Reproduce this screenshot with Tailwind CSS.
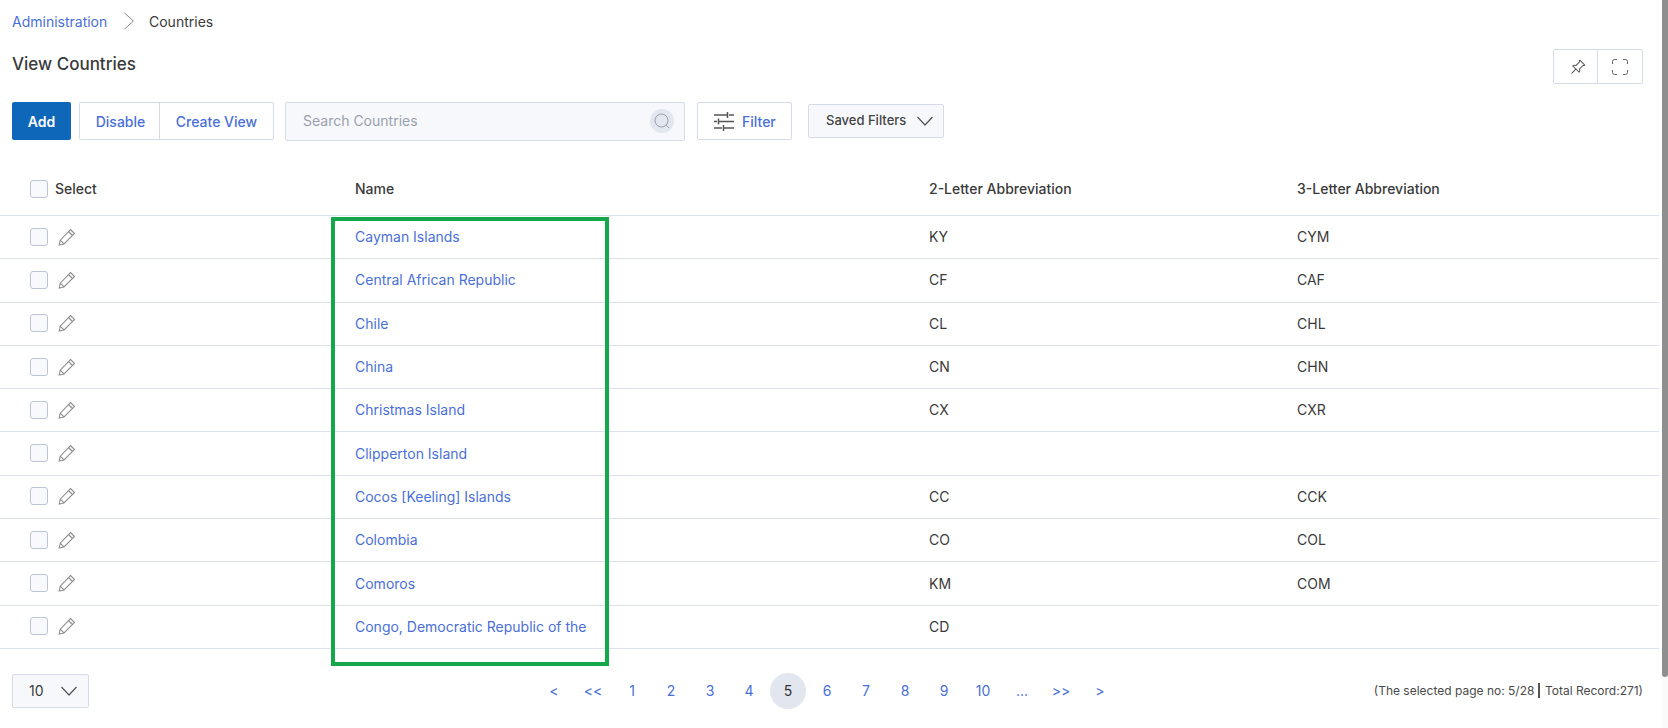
<!doctype html>
<html>
<head>
<meta charset="utf-8">
<script src="https://cdn.jsdelivr.net/npm/@tailwindcss/browser@4"></script>
</head>
<body class="overflow-hidden bg-white">
<div class="flex h-[728px] w-[1668px] font-['Inter',sans-serif] text-[14px] text-[#3a3a3a]">
  <main class="relative w-[1662px] shrink-0 pr-[3px]">
    <!-- breadcrumb -->
    <nav class="flex h-[42px] items-center pl-[12px]">
      <a class="w-[111px] text-[#4a6fd8]">Administration</a>
      <svg class="h-[18px] w-[12px] text-[#8a8a8a]" viewBox="0 0 12 18" fill="none" stroke="currentColor" stroke-width="1"><path d="M1.500 1l9 8-9 8"/></svg>
      <span class="ml-[14px]">Countries</span>
    </nav>
    <!-- title -->
    <div class="flex h-[60px] items-start justify-between pl-[12px] pr-[16px]">
      <h1 class="mt-[10px] text-[17px] leading-[25px] font-medium">View Countries</h1>
      <div class="mt-[7px] flex h-[35px] w-[90px] rounded-[2px] border border-[#d5dbe8]">
        <div class="flex w-[44px] items-center justify-center border-r border-[#d5dbe8] pl-[4px]">
          <svg class="h-[16px] w-[16px] text-[#555]" viewBox="0 0 16 16" fill="currentColor"><path d="M9.828.722a.5.5 0 0 1 .354.146l4.95 4.95a.5.5 0 0 1 0 .707c-.48.48-1.072.588-1.503.588-.177 0-.335-.018-.46-.039l-3.134 3.134a5.927 5.927 0 0 1 .16 1.013c.046.702-.032 1.687-.72 2.375a.5.5 0 0 1-.707 0l-2.829-2.828-3.182 3.182c-.195.195-1.219.902-1.414.707-.195-.195.512-1.22.707-1.414l3.182-3.182-2.828-2.829a.5.5 0 0 1 0-.707c.688-.688 1.673-.767 2.375-.72a5.922 5.922 0 0 1 1.013.16l3.134-3.133a2.772 2.772 0 0 1-.04-.461c0-.43.108-1.022.589-1.503a.5.5 0 0 1 .353-.146zm.122 2.112v-.002.002zm0-.002v.002a.5.5 0 0 1-.122.51L6.293 6.878a.5.5 0 0 1-.511.12H5.78l-.014-.004a4.507 4.507 0 0 0-.288-.076 4.922 4.922 0 0 0-.765-.116c-.422-.028-.836.008-1.175.15l5.51 5.509c.141-.34.177-.753.149-1.175a4.924 4.924 0 0 0-.192-1.054l-.004-.013v-.001a.5.5 0 0 1 .12-.512l3.536-3.535a.5.5 0 0 1 .532-.115l.096.022c.087.017.208.034.344.034.114 0 .23-.011.343-.04L9.927 2.028c-.029.113-.04.23-.04.343a1.779 1.779 0 0 0 .062.46z"/></svg>
        </div>
        <div class="flex flex-1 items-center justify-center">
          <svg class="h-[16px] w-[16px] text-[#666]" viewBox="0 0 16 16" fill="none" stroke="currentColor" stroke-width="1"><path d="M.5 5V2.500a2 2 0 0 1 2-2H5M11 .5h2.500a2 2 0 0 1 2 2V5M15.500 11v2.500a2 2 0 0 1-2 2H11M5 15.500H2.500a2 2 0 0 1-2-2V11"/></svg>
        </div>
      </div>
    </div>
    <!-- toolbar -->
    <div class="flex h-[38px] items-center pl-[12px]">
      <button class="h-[38px] w-[59px] rounded-[2px] bg-[#0f67b9] font-semibold text-white">Add</button>
      <div class="ml-[8px] flex h-[38px] w-[195px] rounded-[2px] border border-[#d5dbe8] font-medium text-[#4a6fd8]">
        <span class="flex w-[80px] items-center justify-center border-r border-[#d5dbe8] pl-[2px]">Disable</span>
        <span class="flex flex-1 items-center justify-center">Create View</span>
      </div>
      <div class="ml-[11px] flex h-[39px] w-[400px] items-center justify-between rounded-[2px] border border-[#d5dbe8] bg-[#f6f8fb] pb-[1px] pl-[17px] pr-[10px] text-[#9aa1ad]">
        <span>Search Countries</span>
        <span class="flex h-[24px] w-[24px] items-center justify-center rounded-full bg-[#e1e6ef]">
          <svg class="h-[18px] w-[18px] text-[#98a0ad]" viewBox="0 0 18 18" fill="none" stroke="currentColor" stroke-width="1"><circle cx="8.500" cy="8.500" r="6.500"/><path d="M13.200 13.200L16 16"/></svg>
        </span>
      </div>
      <div class="ml-[12px] flex h-[38px] w-[95px] items-center rounded-[2px] border border-[#d5dbe8] pl-[16px] font-medium text-[#4a6fd8]">
        <svg class="h-[19px] w-[20px] text-[#555]" viewBox="0 0 20 19" fill="none" stroke="currentColor" stroke-width="1.500"><path d="M0 3h13M15 3h5M13.500 0v6M0 9.500h3M5 9.500h15M4.500 6.500v6M0 16h8M10 16h10M9.500 13v6"/></svg>
        <span class="ml-[8px]">Filter</span>
      </div>
      <div class="ml-[16px] flex h-[34px] w-[136px] items-center rounded-[2px] border border-[#d5dbe8] bg-[#f6f8fb] pl-[17px]">
        <span class="text-[13px] font-medium text-[#444]">Saved Filters</span>
        <svg class="ml-[11px] h-[10px] w-[16px] text-[#555]" viewBox="0 0 16 10" fill="none" stroke="currentColor" stroke-width="1.200"><path d="M.5 1l7.500 8 7.500-8"/></svg>
      </div>
    </div>
    <!-- table -->
    <div class="mt-[31px] text-[14px]">
      <div class="grid h-[45px] grid-cols-[355px_574px_368px_1fr] items-center border-b border-[#dde2ea] pb-[9px] font-medium">
        <div class="flex items-center pl-[30px]"><span class="h-[18px] w-[18px] rounded-[3px] border border-[#bcc5d6] bg-[#f7f9fc]"></span><span class="ml-[7px]">Select</span></div>
        <div>Name</div><div>2-Letter Abbreviation</div><div>3-Letter Abbreviation</div>
      </div>
      <div class="grid h-[43.300px] grid-cols-[355px_574px_368px_1fr] items-center border-b border-[#dde2ea] pb-[1px]"><div class="flex items-center gap-[10px] pl-[30px]"><span class="h-[18px] w-[18px] rounded-[3px] border border-[#bcc5d6] bg-[#f7f9fc]"></span><svg class="h-[18px] w-[18px] text-[#8f8f8f]" viewBox="0 0 18 18" fill="none" stroke="currentColor" stroke-width="1.100"><path d="M12.500 1.500l4 4L6 16l-4.800 1 1-4.800zM10.500 3.500l4 4M2.400 12.300l3.400 3.400"/></svg></div><a class="text-[#4a6fd8]">Cayman Islands</a><div>KY</div><div>CYM</div></div>
      <div class="grid h-[43.300px] grid-cols-[355px_574px_368px_1fr] items-center border-b border-[#dde2ea] pb-[1px]"><div class="flex items-center gap-[10px] pl-[30px]"><span class="h-[18px] w-[18px] rounded-[3px] border border-[#bcc5d6] bg-[#f7f9fc]"></span><svg class="h-[18px] w-[18px] text-[#8f8f8f]" viewBox="0 0 18 18" fill="none" stroke="currentColor" stroke-width="1.100"><path d="M12.500 1.500l4 4L6 16l-4.800 1 1-4.800zM10.500 3.500l4 4M2.400 12.300l3.400 3.400"/></svg></div><a class="text-[#4a6fd8]">Central African Republic</a><div>CF</div><div>CAF</div></div>
      <div class="grid h-[43.300px] grid-cols-[355px_574px_368px_1fr] items-center border-b border-[#dde2ea] pb-[1px]"><div class="flex items-center gap-[10px] pl-[30px]"><span class="h-[18px] w-[18px] rounded-[3px] border border-[#bcc5d6] bg-[#f7f9fc]"></span><svg class="h-[18px] w-[18px] text-[#8f8f8f]" viewBox="0 0 18 18" fill="none" stroke="currentColor" stroke-width="1.100"><path d="M12.500 1.500l4 4L6 16l-4.800 1 1-4.800zM10.500 3.500l4 4M2.400 12.300l3.400 3.400"/></svg></div><a class="text-[#4a6fd8]">Chile</a><div>CL</div><div>CHL</div></div>
      <div class="grid h-[43.300px] grid-cols-[355px_574px_368px_1fr] items-center border-b border-[#dde2ea] pb-[1px]"><div class="flex items-center gap-[10px] pl-[30px]"><span class="h-[18px] w-[18px] rounded-[3px] border border-[#bcc5d6] bg-[#f7f9fc]"></span><svg class="h-[18px] w-[18px] text-[#8f8f8f]" viewBox="0 0 18 18" fill="none" stroke="currentColor" stroke-width="1.100"><path d="M12.500 1.500l4 4L6 16l-4.800 1 1-4.800zM10.500 3.500l4 4M2.400 12.300l3.400 3.400"/></svg></div><a class="text-[#4a6fd8]">China</a><div>CN</div><div>CHN</div></div>
      <div class="grid h-[43.300px] grid-cols-[355px_574px_368px_1fr] items-center border-b border-[#dde2ea] pb-[1px]"><div class="flex items-center gap-[10px] pl-[30px]"><span class="h-[18px] w-[18px] rounded-[3px] border border-[#bcc5d6] bg-[#f7f9fc]"></span><svg class="h-[18px] w-[18px] text-[#8f8f8f]" viewBox="0 0 18 18" fill="none" stroke="currentColor" stroke-width="1.100"><path d="M12.500 1.500l4 4L6 16l-4.800 1 1-4.800zM10.500 3.500l4 4M2.400 12.300l3.400 3.400"/></svg></div><a class="text-[#4a6fd8]">Christmas Island</a><div>CX</div><div>CXR</div></div>
      <div class="grid h-[43.300px] grid-cols-[355px_574px_368px_1fr] items-center border-b border-[#dde2ea] pb-[1px]"><div class="flex items-center gap-[10px] pl-[30px]"><span class="h-[18px] w-[18px] rounded-[3px] border border-[#bcc5d6] bg-[#f7f9fc]"></span><svg class="h-[18px] w-[18px] text-[#8f8f8f]" viewBox="0 0 18 18" fill="none" stroke="currentColor" stroke-width="1.100"><path d="M12.500 1.500l4 4L6 16l-4.800 1 1-4.800zM10.500 3.500l4 4M2.400 12.300l3.400 3.400"/></svg></div><a class="text-[#4a6fd8]">Clipperton Island</a><div></div><div></div></div>
      <div class="grid h-[43.300px] grid-cols-[355px_574px_368px_1fr] items-center border-b border-[#dde2ea] pb-[1px]"><div class="flex items-center gap-[10px] pl-[30px]"><span class="h-[18px] w-[18px] rounded-[3px] border border-[#bcc5d6] bg-[#f7f9fc]"></span><svg class="h-[18px] w-[18px] text-[#8f8f8f]" viewBox="0 0 18 18" fill="none" stroke="currentColor" stroke-width="1.100"><path d="M12.500 1.500l4 4L6 16l-4.800 1 1-4.800zM10.500 3.500l4 4M2.400 12.300l3.400 3.400"/></svg></div><a class="text-[#4a6fd8]">Cocos [Keeling] Islands</a><div>CC</div><div>CCK</div></div>
      <div class="grid h-[43.300px] grid-cols-[355px_574px_368px_1fr] items-center border-b border-[#dde2ea] pb-[1px]"><div class="flex items-center gap-[10px] pl-[30px]"><span class="h-[18px] w-[18px] rounded-[3px] border border-[#bcc5d6] bg-[#f7f9fc]"></span><svg class="h-[18px] w-[18px] text-[#8f8f8f]" viewBox="0 0 18 18" fill="none" stroke="currentColor" stroke-width="1.100"><path d="M12.500 1.500l4 4L6 16l-4.800 1 1-4.800zM10.500 3.500l4 4M2.400 12.300l3.400 3.400"/></svg></div><a class="text-[#4a6fd8]">Colombia</a><div>CO</div><div>COL</div></div>
      <div class="grid h-[43.300px] grid-cols-[355px_574px_368px_1fr] items-center border-b border-[#dde2ea] pb-[1px]"><div class="flex items-center gap-[10px] pl-[30px]"><span class="h-[18px] w-[18px] rounded-[3px] border border-[#bcc5d6] bg-[#f7f9fc]"></span><svg class="h-[18px] w-[18px] text-[#8f8f8f]" viewBox="0 0 18 18" fill="none" stroke="currentColor" stroke-width="1.100"><path d="M12.500 1.500l4 4L6 16l-4.800 1 1-4.800zM10.500 3.500l4 4M2.400 12.300l3.400 3.400"/></svg></div><a class="text-[#4a6fd8]">Comoros</a><div>KM</div><div>COM</div></div>
      <div class="grid h-[43.300px] grid-cols-[355px_574px_368px_1fr] items-center border-b border-[#dde2ea] pb-[1px]"><div class="flex items-center gap-[10px] pl-[30px]"><span class="h-[18px] w-[18px] rounded-[3px] border border-[#bcc5d6] bg-[#f7f9fc]"></span><svg class="h-[18px] w-[18px] text-[#8f8f8f]" viewBox="0 0 18 18" fill="none" stroke="currentColor" stroke-width="1.100"><path d="M12.500 1.500l4 4L6 16l-4.800 1 1-4.800zM10.500 3.500l4 4M2.400 12.300l3.400 3.400"/></svg></div><a class="text-[#4a6fd8]">Congo, Democratic Republic of the</a><div>CD</div><div></div></div>
    </div>
    <!-- footer -->
    <div class="mt-[24px] flex h-[36px] items-center justify-between pl-[12px] pr-[16px]">
      <div class="flex h-[34px] w-[77px] items-center rounded-[2px] border border-[#d5dbe8] bg-[#f6f8fb] pl-[16px]">
        <span>10</span>
        <svg class="ml-[17px] h-[10px] w-[16px] text-[#555]" viewBox="0 0 16 10" fill="none" stroke="currentColor" stroke-width="1.200"><path d="M.5 1l7.500 8 7.500-8"/></svg>
      </div>
      <div class="absolute left-[536px] flex gap-[3px] text-[#4a6fd8]">
        <span class="flex h-[36px] w-[36px] items-center justify-center">&lt;</span>
        <span class="flex h-[36px] w-[36px] items-center justify-center">&lt;&lt;</span>
        <span class="flex h-[36px] w-[36px] items-center justify-center">1</span>
        <span class="flex h-[36px] w-[36px] items-center justify-center">2</span>
        <span class="flex h-[36px] w-[36px] items-center justify-center">3</span>
        <span class="flex h-[36px] w-[36px] items-center justify-center">4</span>
        <span class="flex h-[36px] w-[36px] items-center justify-center rounded-full bg-[#e1e6ef] text-[#333]">5</span>
        <span class="flex h-[36px] w-[36px] items-center justify-center">6</span>
        <span class="flex h-[36px] w-[36px] items-center justify-center">7</span>
        <span class="flex h-[36px] w-[36px] items-center justify-center">8</span>
        <span class="flex h-[36px] w-[36px] items-center justify-center">9</span>
        <span class="flex h-[36px] w-[36px] items-center justify-center">10</span>
        <span class="flex h-[36px] w-[36px] items-center justify-center">...</span>
        <span class="flex h-[36px] w-[36px] items-center justify-center">&gt;&gt;</span>
        <span class="flex h-[36px] w-[36px] items-center justify-center">&gt;</span>
      </div>
      <div class="flex items-center text-[12px] text-[#4a4a4a]"><span>(The selected page no: 5/28</span><span class="ml-[4px] mr-[5px] h-[15px] w-[1.500px] bg-[#555]"></span><span>Total Record:271)</span></div>
    </div>
    <!-- highlight annotation -->
    <div class="absolute left-[331px] top-[217px] h-[449px] w-[278px] border-[4px] border-[#14a84b]"></div>
  </main>
  <aside class="h-full w-[6px] bg-[#fafafa]"><div class="h-[677px] rounded-b-[3px] bg-[#8f8f8f]"></div></aside>
</div>
</body>
</html>
